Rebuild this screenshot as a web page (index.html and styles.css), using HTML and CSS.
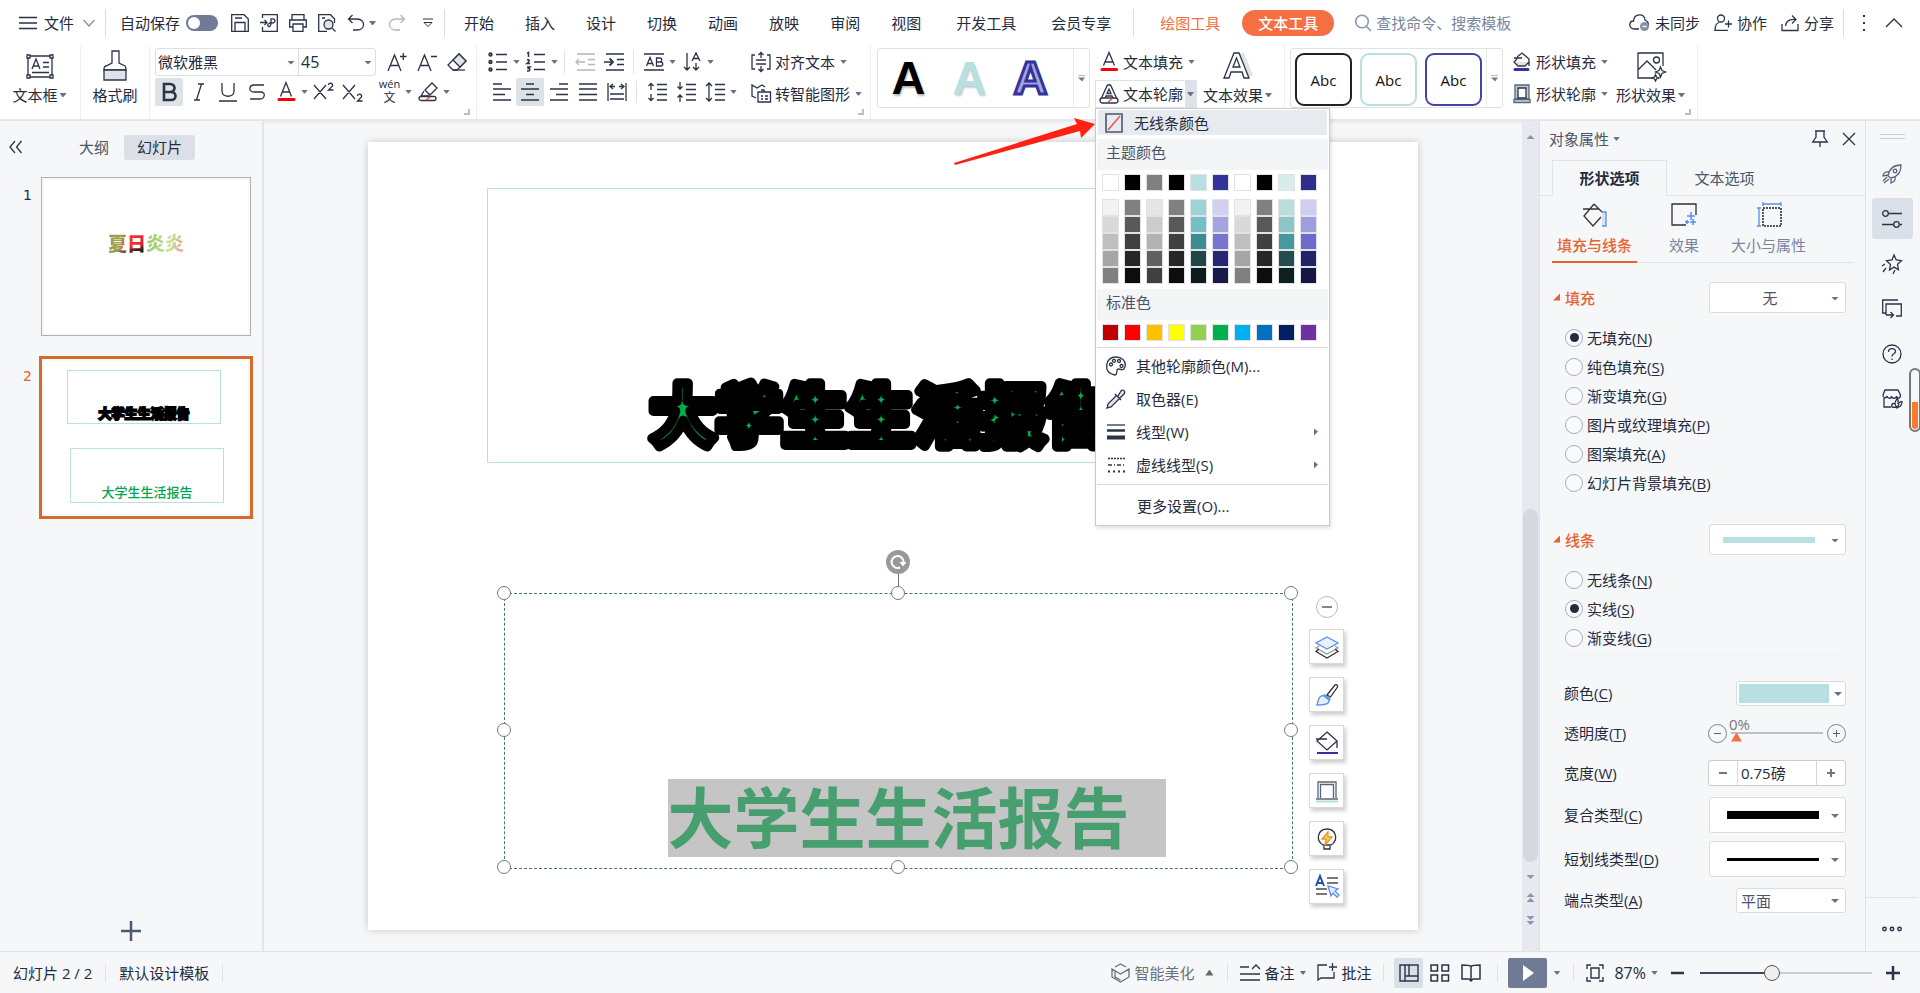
FILE: index.html
```html
<!DOCTYPE html>
<html lang="zh-CN">
<head>
<meta charset="utf-8">
<title>演示文稿</title>
<link rel="stylesheet" href="styles.css">
</head>
<body>
<div class="app">
  <header class="menubar">
    <button class="file-menu"><svg width="18" height="14" viewBox="0 0 18 14"><path d="M0 1.5h18M0 7h18M0 12.5h18"/></svg>文件<svg class="muted chev" width="12" height="8" viewBox="0 0 12 8"><path d="M.5 1 6 7l5.500-6"/></svg></button>
    <span class="bar-line"></span>
    <label class="autosave">自动保存<input type="checkbox" class="toggle"></label>
    <div class="quick">
      <button aria-label="保存"><svg width="18" height="18" viewBox="0 0 18 18"><path d="M.7.7h12.300l4.300 4.300v12.300H.7zM4 17V8.500h10V17M4 4h7"/></svg></button>
      <button aria-label="输出"><svg width="18" height="18" viewBox="0 0 18 18"><path d="M2.500 4V.7h14.800v16.600H2.500V13M0 8.500h7M4.500 6 7 8.500 4.500 11M8 12c2 2 3-1 3-3V5c5-1 5 4 1 4-4 0-5 2-4 3"/></svg></button>
      <button aria-label="打印"><svg width="18" height="18" viewBox="0 0 18 18"><path d="M3 6V.7h12V6M3.500 13H.7V6h16.600v7h-2.800M4 10h10v7.300H4z"/></svg></button>
      <button aria-label="预览"><svg width="18" height="18" viewBox="0 0 18 18"><path d="M9 17.300H.7V.7h11.800l4 4V9M4 4h3"/><circle cx="10.500" cy="10.500" r="4.500" fill="#dfe3ea"/><path d="m14 14 3.500 3.500"/></svg></button>
      <button aria-label="撤销"><svg width="18" height="18" viewBox="0 0 18 18"><path d="M5.500 1 1.500 5l4 4M1.500 5H10c9 0 8.500 11 0 11H6"/></svg><i class="caret"></i></button>
      <button aria-label="重做"><svg class="faint" width="18" height="18" viewBox="0 0 18 18"><path d="m12.500 1 4 4-4 4M16.500 5H8c-9 0-8.500 11 0 11h4"/></svg></button>
      <button aria-label="更多"><svg width="10" height="10" viewBox="0 0 10 10"><path d="M0 1h10M1 4.500l4 4 4-4z" stroke-width="1"/></svg></button>
    </div>
    <span class="bar-line"></span>
    <nav class="tabs">
      <a href="#">开始</a><a href="#">插入</a><a href="#">设计</a><a href="#">切换</a><a href="#">动画</a><a href="#">放映</a><a href="#">审阅</a><a href="#">视图</a>
    </nav>
    <nav class="tabs wide"><a href="#">开发工具</a><a href="#">会员专享</a></nav>
    <span class="bar-line"></span>
    <nav class="tabs tools"><a href="#">绘图工具</a><a href="#" class="pill">文本工具</a></nav>
    <label class="search"><svg width="18" height="18" viewBox="0 0 18 18"><circle cx="7" cy="7.500" r="6.300"/><path d="m11.500 12.500 4.500 4.500"/></svg><input type="text" placeholder="查找命令、搜索模板"></label>
    <div class="account">
      <button><svg width="21" height="18" viewBox="0 0 21 18"><path d="M10 15H5C-1 14 0 7 4.500 7 5-1 16-1 16 6c3 1 4 4 3 6"/><circle cx="15.500" cy="12.500" r="4.500" fill="#8791a8" stroke="none"/><path d="M13.500 12.500h4" stroke="#fff"/></svg>未同步</button>
      <button><svg width="18" height="18" viewBox="0 0 18 18"><circle cx="7" cy="4.500" r="3.500"/><path d="M5 8.500C1.500 9.500 1 12 1 16.300h13M14.500 6.500v7M11 10h7"/></svg>协作</button>
      <button><svg width="18" height="18" viewBox="0 0 18 18"><path d="M1 10v6.500h16V10M4.500 12C5 7 9 5 14.500 5.500M11 1.500l4 4-4 4"/></svg>分享</button>
      <span class="bar-line"></span>
      <button aria-label="选项"><svg width="4" height="18" viewBox="0 0 4 18"><path d="M1 2h2M1 9h2M1 16h2" stroke-width="2"/></svg></button>
      <button aria-label="收起功能区"><svg width="18" height="10" viewBox="0 0 18 10"><path d="m1 9 8-8 8 8"/></svg></button>
    </div>
  </header>

  <section class="ribbon">
    <div class="group"><button class="big"><svg width="28" height="30" viewBox="0 0 28 30"><path d="M2 5h24v21H2z"/><path d="M1 4h3v3H1zM24 4h3v3h-3zM1 24h3v3H1zM24 24h3v3h-3z" fill="#fff"/><path d="m6 18 4-10 4 10M7.500 15h5M17 11.500h6M17 16h6M6 21.500h17"/></svg><span>文本框<i class="caret"></i></span></button></div>
    <div class="group"><button class="big narrow"><svg width="24" height="31" viewBox="0 0 24 31"><path d="M9 1h7v12l6 3c1 1 1 2 1 4H1c0-3 1-4 2-4l6-3z"/><path d="M1 20h22v10H1z" fill="#dfe2e8"/></svg><span>格式刷</span></button></div>

    <div class="group text-group">
      <div class="tool-row">
        <div class="font-box"><label class="pick font-name"><select aria-label="字体"><option>微软雅黑</option></select></label><label class="pick font-size"><select aria-label="字号"><option>45</option></select></label></div>
        <div class="sizers">
          <button aria-label="增大字号"><svg width="20" height="20" viewBox="0 0 20 20"><path d="m1 19 6.500-16L14 19M3.500 13.500h8M13 4.500h6.500M16.300 1v7"/></svg></button>
          <button aria-label="减小字号"><svg width="20" height="20" viewBox="0 0 20 20"><path d="m1 19 6.500-16L14 19M3.500 13.500h8M14 4.500h6"/></svg></button>
          <button aria-label="清除格式"><svg width="20" height="20" viewBox="0 0 20 20"><path d="M12 2 19 9l-9 9H6l-5-5z"/><path d="m6 8 7 7 6-6-7-7z" fill="#e1e4e9"/><path d="M6 18h12"/></svg></button>
        </div>
      </div>
      <div class="tool-row">
        <button class="sq on gap" aria-label="加粗"><svg width="20" height="20" viewBox="0 0 20 20"><path d="M5 2h6c6 0 6 8 0 8H5zM5 10h7c6 0 6 8 0 8H5z" stroke-width="2.600"/></svg></button>
        <button class="sq" aria-label="倾斜"><svg width="20" height="20" viewBox="0 0 20 20"><path d="M9 2h6M5 18h6M12.500 2 7.500 18"/></svg></button>
        <button class="sq" aria-label="下划线"><svg width="20" height="20" viewBox="0 0 20 20"><path d="M4 1v8c0 7 12 7 12 0V1M1 19h18"/></svg></button>
        <button class="sq" aria-label="删除线"><svg width="20" height="20" viewBox="0 0 20 20"><path d="M17 3H7C2 3 1 10 7 10h7c5 0 4 7-1 7H3"/></svg></button>
        <button class="sq" aria-label="字体颜色"><svg width="20" height="20" viewBox="0 0 20 20"><path d="m4.500 14.500 5.500-14 5.500 14M6.500 10h7"/><path d="M3 17.500h15" stroke="#f00" stroke-width="3" stroke-linecap="round"/></svg></button><i class="caret"></i>
        <button class="sq" aria-label="上标"><svg width="20" height="20" viewBox="0 0 20 20"><path d="M0 3l12 14M12 3 0 17M14.500 3c0-3 5-2 4 1l-4 4H19.500"/></svg></button>
        <button class="sq gap" aria-label="下标"><svg width="20" height="20" viewBox="0 0 20 20"><path d="M0 3l12 14M12 3 0 17M14.500 14c0-3 5-2 4 1l-4 4H19.500"/></svg></button>
        <button class="sq pinyin" aria-label="拼音指南"><span>wén</span><b>文</b></button><i class="caret"></i>
        <button class="sq" aria-label="突出显示"><svg width="20" height="20" viewBox="0 0 20 20"><path d="m7 8 7-7 5 5-7 7zM7 8l5 5M6 9l-3 5h5l3-1"/><rect x="1" y="14.500" width="17" height="4" rx="2"/><path d="m8 18 4-3" stroke="#e44"/></svg></button><i class="caret"></i>
      </div>
      <i class="corner"></i>
    </div>

    <div class="group para-group">
      <div class="para-tools">
        <div class="tool-row">
          <button class="sq" aria-label="项目符号"><svg width="20" height="20" viewBox="0 0 20 20"><path d="M8 2.500h11M8 10h11M8 17.500h11"/><g stroke-width="1.800"><circle cx="2.500" cy="2.500" r="1.300"/><circle cx="2.500" cy="10" r="1.300"/><circle cx="2.500" cy="17.500" r="1.300"/></g></svg></button><i class="caret"></i>
          <button class="sq" aria-label="编号"><svg width="20" height="20" viewBox="0 0 20 20"><path d="M8 2.500h11M8 10h11M8 17.500h11"/><path d="M1 1.500 2.500.5V5M1 8c3-1 3 1 0 3.500h3M1 15h3L2.500 16.500c2 0 2 3-1.500 2.500" stroke-width="1.500"/></svg></button><i class="caret"></i>
          <span class="mini-line"></span>
          <button class="sq" aria-label="减少缩进"><svg class="faint" width="20" height="20" viewBox="0 0 20 20"><path d="M2 2h18M13 7.500h7M13 12.500h7M2 18h18M1 10h9M4 7l-3 3 3 3"/></svg></button>
          <button class="sq" aria-label="增加缩进"><svg width="20" height="20" viewBox="0 0 20 20"><path d="M2 2h18M13 7.500h7M13 12.500h7M2 18h18M0 10h9"/><path d="m5.500 6.500 3.500 3.500-3.500 3.500" stroke-width="1.800"/></svg></button>
          <span class="mini-line"></span>
          <button class="sq" aria-label="字符间距"><svg width="20" height="20" viewBox="0 0 20 20"><path d="M0 2h20M0 18h20M2.500 14 6 5.500 9.500 14M4 11.500h4M12.500 6h3c3 0 3 4 0 4h-3zM12.500 10h4c3 0 3 4 0 4h-4z"/></svg></button><i class="caret"></i>
          <button class="sq" aria-label="文字方向"><svg width="20" height="20" viewBox="0 0 20 20"><path d="M5 1v17M2 15l3 3 3-3M10 9l4-8 4 8M11.500 6.500h5M14 11v7M11 15l3 3 3-3"/></svg></button><i class="caret"></i>
        </div>
        <div class="tool-row inset">
          <button class="sq" aria-label="左对齐"><svg width="20" height="20" viewBox="0 0 20 20"><path d="M1 2h9M1 7h18M1 12.500h12M1 18h18"/></svg></button>
          <button class="sq on" aria-label="居中"><svg width="20" height="20" viewBox="0 0 20 20"><path d="M6 2h8M1 7h18M6 12.500h8M1 18h18"/></svg></button>
          <button class="sq" aria-label="右对齐"><svg width="20" height="20" viewBox="0 0 20 20"><path d="M10 2h9M1 7h18M7 12.500h12M1 18h18"/></svg></button>
          <button class="sq" aria-label="两端对齐"><svg width="20" height="20" viewBox="0 0 20 20"><path d="M1 2h18M1 7h18M1 12.500h18M1 18h18"/></svg></button>
          <button class="sq" aria-label="分散对齐"><svg width="20" height="20" viewBox="0 0 20 20"><path d="M1 1v18M19 1v18M3 4.500h5M12 4.500h5M6 2 3 4.500 6 7M14 2l3 2.500L14 7M3 12h14M3 17h14"/></svg></button>
          <span class="mini-line"></span>
          <button class="sq" aria-label="增大段距"><svg width="20" height="20" viewBox="0 0 20 20"><path d="M10 2.500h10M10 7.500h10M10 12.500h10M10 18h10M4 8V1M1.500 4 4 1.500 6.500 4M4 12v7M1.500 16 4 18.500 6.500 16"/></svg></button>
          <button class="sq" aria-label="减小段距"><svg width="20" height="20" viewBox="0 0 20 20"><path d="M10 2.500h10M10 7.500h10M10 12.500h10M10 18h10M4 0v7M1.500 4.500 4 7l2.500-2.500M4 20v-7M1.500 15.500 4 13l2.500 2.500"/></svg></button>
          <button class="sq" aria-label="行距"><svg width="20" height="20" viewBox="0 0 20 20"><path d="M10 2.500h10M10 7.500h10M10 12.500h10M10 18h10M4 1v18M1 4l3-3 3 3M1 16l3 3 3-3"/></svg></button><i class="caret"></i>
        </div>
      </div>
      <div class="stack">
        <button class="line-btn"><svg width="20" height="20" viewBox="0 0 20 20"><path d="M4 3H1v14h3M16 3h3v14h-3M5 8h10M5 12h10M10 0v6M7.500 3 10 .5 12.500 3M10 14v6M7.500 17l2.500 2.500 2.500-2.500"/></svg>对齐文本<i class="caret"></i></button>
        <button class="line-btn"><svg width="20" height="20" viewBox="0 0 20 20"><path d="M5 14 1 12V1l5 3 5-3 3 2M7 8h12.500v10H7zM10 12h2M14 12h3M10 15h2M14 15h3M13 8V6h-3"/></svg>转智能图形<i class="caret"></i></button>
      </div>
      <i class="corner"></i>
    </div>

    <div class="group art-group">
      <div class="gallery"><button class="art black">A</button><button class="art mint">A</button><button class="art indigo">A</button><button class="more" aria-label="更多样式"><i></i></button></div>
      <div class="stack">
        <button class="line-btn"><svg width="20" height="20" viewBox="0 0 20 20"><path d="m4.500 13.500 5.500-13 5.500 13M6.500 10h7"/><path d="M3 17.500h14.500" stroke="#f00" stroke-width="3" stroke-linecap="round"/></svg>文本填充<i class="caret"></i></button>
        <div class="outline-host">
          <button class="line-btn outline-btn"><span><svg width="20" height="20" viewBox="0 0 20 20"><path d="M2 15 8.500 1h3L18 15h-3.500L13 12H7l-1.500 3zM8 9.500h4L10 5z"/><rect x="1" y="14" width="18" height="5" rx="2.500" fill="#fff"/><path d="m9 18 4-3" stroke="#e44"/></svg>文本轮廓</span><i class="caret"></i></button>
          <div class="dropdown">
            <button class="no-line"><svg width="18" height="20" viewBox="0 0 18 20"><path d="M1 1h16v18H1z" stroke="#4a5670" stroke-width="1.600"/><path d="M3 17 15 3" stroke="#ef5350" stroke-width="1.500"/></svg>无线条颜色</button>
            <h3>主题颜色</h3>
            <div class="swatches" id="theme-base"></div>
            <div class="swatches shades" id="theme-shades"></div>
            <h3>标准色</h3>
            <div class="swatches" id="standard"></div>
            <hr>
            <button class="item"><svg width="20" height="20" viewBox="0 0 20 20"><path d="M11 14c0 3-1 5-2 5C3 18 0 15 .7 9 1 4 5 1 10 1c6 0 9.500 4 9.300 8C19 13 17 14 15 13.500c-2-.5-4-1-4 .5z"/><circle cx="5" cy="8.500" r="1.500"/><circle cx="8" cy="4.800" r="1.500"/><circle cx="13" cy="5" r="1.500"/><circle cx="15.500" cy="10" r="1.500"/></svg>其他轮廓颜色(M)...</button>
            <button class="item"><svg width="20" height="20" viewBox="0 0 20 20"><path d="M11 6 2 15l-1 4 4-1 9-9M9 5l6 6M12 7l3-5c2-2 5 0 3 3l-4 4" fill="#e6e9ed"/></svg>取色器(E)</button>
            <button class="item"><svg width="20" height="20" viewBox="0 0 20 20"><path d="M1 3h18"/><path d="M1 8.500h18" stroke-width="2.500"/><path d="M1 15.500h18" stroke-width="4"/></svg>线型(W)<i class="sub"></i></button>
            <button class="item"><svg width="20" height="20" viewBox="0 0 20 20"><path d="M2 3.500h17" stroke-dasharray="2 1"/><path d="M2 10h17" stroke-dasharray="4 2 1 2"/><path d="M2 16.500h17" stroke-width="2" stroke-dasharray="2 3"/></svg>虚线线型(S)<i class="sub"></i></button>
            <hr>
            <button class="item last">更多设置(O)...</button>
          </div>
        </div>
      </div>
      <button class="big"><svg width="32" height="30" viewBox="0 0 32 30"><path d="M16 2h6l9 22-8 3z" fill="#e3e3e5" stroke="none"/><path d="M2 27 12 2h5l10 25h-5l-2-6H9l-2 6zM11 16h7l-3.500-9z" fill="#fff"/></svg><span>文本效果<i class="caret"></i></span></button>
    </div>

    <div class="group art-group shape-group">
      <div class="gallery shapes"><button class="abc k">Abc</button><button class="abc m">Abc</button><button class="abc i">Abc</button><button class="more" aria-label="更多形状样式"><i></i></button></div>
      <div class="stack">
        <button class="line-btn"><svg width="20" height="20" viewBox="0 0 20 20"><path d="M3 10h13l-3 3H6z" fill="#dfe3e8" stroke="none"/><path d="m5 5 5-4 7 6v3l-4 4H6L2 10l3-3M2 6h8M17 8v6"/><path d="M3 17.500h13" stroke="#33339b" stroke-width="3" stroke-linecap="round"/></svg>形状填充<i class="caret"></i></button>
        <button class="line-btn"><svg width="20" height="20" viewBox="0 0 20 20"><path d="M3 1h14v14H3z" fill="#c5cad3" stroke="#59647a"/><path d="M6 4h8v10H6z" fill="#fff"/><path d="M2 15.500h16v3H2z" fill="#b8dfe1" stroke="#59647a"/></svg>形状轮廓<i class="caret"></i></button>
      </div>
      <button class="big"><svg width="30" height="30" viewBox="0 0 30 30"><path d="M17 27H2V2h25v13M2 19l9-9 9 9"/><circle cx="20.500" cy="9" r="3"/><path d="m24.500 16 1.500 3.500 3.500 1.500-3.500 1.500-1.500 3.500-1.500-3.500-3.500-1.500 3.500-1.500zM19.500 23.500l1 2.500 2.500 1-2.500 1-1 2-1-2-2.500-1 2.500-1z" fill="#fff"/></svg><span>形状效果<i class="caret"></i></span></button>
      <i class="corner"></i>
    </div>
  </section>

  <svg class="pointer" width="142" height="50" viewBox="0 0 142 50"><path d="M0 46 123 7 120 1l21 6-14 14-1-7L1 48z"/></svg>

  <main class="workspace">
    <aside class="slides">
      <div class="slides-head">
        <button class="collapse" aria-label="折叠"><svg width="13" height="12" viewBox="0 0 13 12"><path d="M6 0 1 6l5 6M12.500 0l-5 6 5 6"/></svg></button>
        <button class="view-tab">大纲</button><button class="view-tab on">幻灯片</button>
      </div>
      <ol class="thumbs">
        <li><span class="num">1</span><div class="thumb"><b class="summer">夏日炎炎</b></div></li>
        <li class="current"><span class="num">2</span><div class="thumb"><div class="mini-box first">大学生生活报告</div><div class="mini-box second">大学生生活报告</div></div></li>
      </ol>
      <button class="add" aria-label="新建幻灯片"><svg width="20" height="20" viewBox="0 0 20 20"><path d="M10 0v20M0 10h20" stroke="#4c5874" stroke-width="2.500"/></svg></button>
    </aside>

    <section class="stage">
      <div class="slide">
        <div class="text-box plain"><svg class="outlined" width="462" height="78" viewBox="0 0 462 78"><text x="0" y="65">大学生生活报告</text></svg></div>
        <div class="text-box selected">
          <span class="title marked">大学生生活报告</span>
          <i class="stem"></i>
          <svg class="rotate" width="24" height="24" viewBox="0 0 24 24"><circle cx="12" cy="12" r="12"/><path d="M14 17.500A6 6 0 1 1 17.500 13"/><path d="M13.500 12h7l-3.500 4.500z" class="tip"/></svg>
          <i class="handle nw"></i><i class="handle n"></i><i class="handle ne"></i><i class="handle w"></i><i class="handle e"></i><i class="handle sw"></i><i class="handle s"></i><i class="handle se"></i>
        </div>
        <div class="float-tools">
          <button class="fold" aria-label="收起"></button>
          <button aria-label="叠放次序"><svg width="24" height="24" viewBox="0 0 24 24"><path d="m4 11-3 2 11 6 11-6-3-2" stroke="#999"/><path d="m4 14-3 2.500L12 23l11-6.500-3-2.500" stroke="#333"/><path d="M12 2 23 8l-11 6L1 8z" stroke="#5b8fe8" fill="#e8f0fc"/></svg></button>
          <button aria-label="格式刷"><svg width="24" height="24" viewBox="0 0 24 24"><path d="m12 12 8-10c1-1 3 0 2.500 2l-7 10z" stroke="#333"/><path d="m10 12 5 4-2 4c-2 2-6 2-11 2 1-3 1-7 4-9zM9 13l5 4" stroke="#5b8fe8" fill="#e8f0fc"/></svg></button>
          <button aria-label="填充"><svg width="24" height="24" viewBox="0 0 24 24"><path d="m12 1 10 9-10 9-10-9zM1 8h11M22 10v7"/><path d="M2 22h21" stroke="#2f2f9d" stroke-width="2"/></svg></button>
          <button aria-label="轮廓"><svg width="24" height="24" viewBox="0 0 24 24"><path d="M3 19V3h18v16" stroke="#59647a"/><path d="M5.500 19V5.500h13V19M1 20h22" stroke="#59647a"/><path d="M1 22.500h22" stroke="#b8dfe1" stroke-width="2"/></svg></button>
          <button aria-label="智能"><svg width="24" height="24" viewBox="0 0 24 24"><path d="M8 18C0 13 3 2 12 2s12 11 4 16zM9 19v3h6v-3" stroke="#333"/><path d="m13 5-6 7h4l-1 6 7-8h-4z" fill="#ffd83d" stroke="#e8913a"/></svg></button>
          <button aria-label="文字效果"><svg width="24" height="24" viewBox="0 0 24 24"><path d="M1 11 5 1l4 10M3 8h4" stroke="#2b4fa0" stroke-width="2"/><path d="M12 3h11M12 8h11M1 14h11M1 19h11" stroke="#777" stroke-width="1.800"/><path d="m13 11 3 10 2-3 4 4 2-2-4-4 3-2z" fill="#e8f0fc" stroke="#5b8fe8"/></svg></button>
        </div>
      </div>
    </section>

    <div class="scroll"><i class="tri up"></i><div class="track"><div class="thumb-bar"></div></div><i class="tri down"></i><span><i class="tri up"></i><i class="tri up"></i></span><span><i class="tri down"></i><i class="tri down"></i></span></div>

    <aside class="props">
      <div class="props-head"><span>对象属性<i class="caret"></i></span><button aria-label="固定"><svg width="16" height="17" viewBox="0 0 16 17"><path d="M3 1h10M4 1v6L.7 12h14.600L12 7V1M8 12v5"/></svg></button><button aria-label="关闭"><svg width="14" height="14" viewBox="0 0 14 14"><path d="m1 1 12 12M13 1 1 13"/></svg></button></div>
      <div class="props-tabs"><button class="on">形状选项</button><button>文本选项</button></div>
      <div class="sub-tabs">
        <button class="on"><svg width="28" height="28" viewBox="0 0 28 28"><path d="m13 3-10 12 9 10 8-9M13 3l8 8M2 8h16" stroke="#333"/><path d="M21 11h4v14h-4" stroke="#5b8fe8" fill="#d5e3fa"/></svg>填充与线条</button>
        <button><svg width="28" height="28" viewBox="0 0 28 28"><path d="M16 24H2V3h24v11" stroke="#333"/><path d="M21 11v8M17 15h8M17 19v4M15 21h4M23 18v6M20 21h6" stroke="#5b8fe8" stroke-width="1.500"/></svg>效果</button>
        <button><svg width="28" height="28" viewBox="0 0 28 28"><path d="M8 7h18v18H8z" stroke="#222" stroke-width="1.500" stroke-dasharray="2 1"/><path d="M8 3h18M8 1v4M26 1v4M4 7v18M2 7h4M2 25h4" stroke="#5b8fe8"/></svg>大小与属性</button>
      </div>
      <div class="props-body">
        <div class="section-head"><h2>填充</h2><label class="pick drop"><select aria-label="填充方式"><option>无</option></select></label></div>
        <div class="radios">
          <label><input type="radio" name="fill" checked><span>无填充(<u>N</u>)</span></label>
          <label><input type="radio" name="fill"><span>纯色填充(<u>S</u>)</span></label>
          <label><input type="radio" name="fill"><span>渐变填充(<u>G</u>)</span></label>
          <label><input type="radio" name="fill"><span>图片或纹理填充(<u>P</u>)</span></label>
          <label><input type="radio" name="fill"><span>图案填充(<u>A</u>)</span></label>
          <label><input type="radio" name="fill"><span>幻灯片背景填充(<u>B</u>)</span></label>
        </div>
        <div class="section-head lines"><h2>线条</h2><button class="pick drop preview" aria-label="线条样式"><i class="bar mint-bar"></i></button></div>
        <div class="radios">
          <label><input type="radio" name="line"><span>无线条(<u>N</u>)</span></label>
          <label><input type="radio" name="line" checked><span>实线(<u>S</u>)</span></label>
          <label><input type="radio" name="line"><span>渐变线(<u>G</u>)</span></label>
        </div>
        <div class="fields">
          <div class="field"><span>颜色(<u>C</u>)</span><button class="pick color-drop" aria-label="颜色"><i></i></button></div>
          <div class="field"><label for="alpha">透明度(<u>T</u>)</label><div class="alpha"><button aria-label="减少"><svg width="9" height="9" viewBox="0 0 9 9"><path d="M1 4.500h7"/></svg></button><div class="alpha-track"><output>0%</output><input id="alpha" type="range" min="0" max="100" value="0"></div><button aria-label="增加"><svg width="9" height="9" viewBox="0 0 9 9"><path d="M1 4.500h7M4.500 1v7"/></svg></button></div></div>
          <div class="field"><label for="width">宽度(<u>W</u>)</label><div class="spin"><button aria-label="减小宽度"><svg width="8" height="10" viewBox="0 0 8 10"><path d="M0 5h8"/></svg></button><input id="width" type="text" value="0.75磅"><button aria-label="增大宽度"><svg width="8" height="10" viewBox="0 0 8 10"><path d="M0 5h8M4 1v8"/></svg></button></div></div>
          <div class="field tall"><span>复合类型(<u>C</u>)</span><button class="pick drop preview" aria-label="复合类型"><i class="bar thick"></i></button></div>
          <div class="field tall"><span>短划线类型(<u>D</u>)</span><button class="pick drop preview" aria-label="短划线类型"><i class="bar thin"></i></button></div>
          <div class="field short"><label for="cap">端点类型(<u>A</u>)</label><span class="pick cap-drop"><select id="cap"><option>平面</option></select></span></div>
        </div>
      </div>
    </aside>

    <aside class="rail">
      <i class="grip"></i>
      <button aria-label="快捷"><svg class="slate" width="20" height="20" viewBox="0 0 20 20"><path d="M6 12c1-6 5-11 13-11 0 8-4 12-10 13zM7 8C3 7 1 10 1 12l5-1M9 14v5c3-1 5-3 4-7M5 13l-4 4M7 15l-5 4"/><circle cx="13" cy="7" r="1.800"/></svg></button>
      <button class="on" aria-label="属性"><svg width="20" height="20" viewBox="0 0 20 20"><circle cx="3.500" cy="4.500" r="2.800"/><path d="M6.500 4.500H20M0 15.500h11.500M17.500 15.500H20"/><circle cx="14.500" cy="15.500" r="2.800"/></svg></button>
      <button aria-label="动画"><svg width="20" height="20" viewBox="0 0 20 20"><path d="m12 1 2.300 5 5.200.700-4 3.600 1 5.500-4.500-2.700L7.500 16l1-5.500-4-3.800L10 6zM3 10l-3 2M4 14l-3 4M13 16l-2 4"/></svg></button>
      <button aria-label="切换"><svg width="20" height="20" viewBox="0 0 20 20"><path d="M16 1H.7v13H4M4 16V5h15.300v12H14M4 16h7M8.500 13l3 3-3 3"/></svg></button>
      <button aria-label="帮助"><svg width="20" height="20" viewBox="0 0 20 20"><circle cx="10" cy="10" r="9"/><path d="M6.500 8c0-5 7-4 7-.5 0 2.500-3.500 2-3.500 5M10 14.500v1.500"/></svg></button>
      <button aria-label="素材"><svg width="20" height="20" viewBox="0 0 20 20"><path d="M3 1h13l2.500 5c0 4-4 4-4 1 0 3-5 3-5 0 0 3-4 3-4.500 0C4 10 1 9 1 6zM2 9v9h7M10 18c-1-4 2-4 3-3 0-3 1-4 2.500-6 1 3 1 4 .5 6 2-3 4-2 4-3 0 7-5 7-10 6zM13 15l2 4 2-4"/></svg></button>
      <button class="dots" aria-label="更多"><svg width="20" height="6" viewBox="0 0 20 6"><g stroke-width="1.500"><circle cx="2.500" cy="3" r="1.700"/><circle cx="10" cy="3" r="1.700"/><circle cx="17.500" cy="3" r="1.700"/></g></svg></button>
      <i class="gauge"></i>
    </aside>
  </main>

  <footer class="status">
    <span>幻灯片 2 / 2</span><span class="stat-line"></span><span>默认设计模板</span><span class="stat-line"></span>
    <div class="status-right">
      <button class="beautify"><svg width="19" height="20" viewBox="0 0 19 20"><path d="M4 4 9.500 1 15 4M1 6l8.500 5L18 6v8l-8.500 5L1 14zM4 8v6l5.500 3"/></svg>智能美化<i class="tri-up"></i></button>
      <span class="stat-line"></span>
      <button><svg width="20" height="20" viewBox="0 0 20 20"><path d="M0 4h9M12 6l4-4 4 4M0 11h20M0 17h20"/></svg>备注<i class="caret"></i></button>
      <button><svg width="20" height="20" viewBox="0 0 20 20"><path d="M10 2H1v15l3-2h13V9M15.500 0v8M12 4h8"/></svg>批注</button>
      <span class="stat-line"></span>
      <div class="views">
        <button class="on" aria-label="普通视图"><svg width="20" height="18" viewBox="0 0 20 18"><path d="M1 1h18v16H1zM6 1v16M10 1v11h9M6 12h4" stroke-width="1.400"/></svg></button>
        <button aria-label="幻灯片浏览"><svg width="20" height="18" viewBox="0 0 20 18"><path d="M1 1h6.500v6H1zM12 1h6.500v6H12zM1 11h6.500v6H1zM12 11h6.500v6H12z" stroke-width="1.500"/></svg></button>
        <button aria-label="阅读视图"><svg width="20" height="18" viewBox="0 0 20 18"><path d="M10 2.500C9 1 7 1 1 1v14h7l2 2 2-2h7V1c-6 0-8 0-9 1.500V17" stroke-width="1.500"/></svg></button>
      </div>
      <span class="stat-line"></span>
      <button class="play" aria-label="放映"><svg width="12" height="16" viewBox="0 0 12 16"><path d="M1 0v16l11-8z"/></svg></button><i class="caret"></i>
      <span class="stat-line"></span>
      <button class="fit" aria-label="适应窗口"><svg width="18" height="18" viewBox="0 0 18 18"><path d="M1 5V1h4M13 1h4v4M17 13v4h-4M5 17H1v-4M5 4h8v10H5z" stroke-width="1.400"/></svg></button>
      <button class="pct">87%<i class="caret"></i></button>
      <button aria-label="缩小"><svg width="13" height="14" viewBox="0 0 13 14"><path d="M0 7h13" stroke-width="2.500"/></svg></button>
      <input class="zoom" type="range" min="0" max="100" value="41" aria-label="缩放">
      <button aria-label="放大"><svg width="14" height="14" viewBox="0 0 14 14"><path d="M0 7h14M7 0v14" stroke-width="2.500"/></svg></button>
    </div>
  </footer>
</div>
<script src="swatches.js"></script>
</body>
</html>
```
FILE: swatches.js
```js
const base = ['#ffffff', '#000000', '#808080', '#000000', '#b8dfe1', '#333399', '#ffffff', '#000000', '#d9ecec', '#2d2d8a'];
const shades = [
  ['#f2f2f2', '#808080', '#e6e6e6', '#808080', '#9dd3d6', '#d2d2f0', '#f2f2f2', '#808080', '#badddd', '#cecef0'],
  ['#d9d9d9', '#595959', '#cccccc', '#595959', '#73c1c6', '#a4a4df', '#d9d9d9', '#595959', '#8bc7c9', '#9d9ddf'],
  ['#bfbfbf', '#404040', '#b3b3b3', '#404040', '#3c8d92', '#7676d1', '#bfbfbf', '#404040', '#459a9d', '#6c6ccf'],
  ['#a6a6a6', '#262626', '#606060', '#262626', '#1e4649', '#262673', '#a6a6a6', '#262626', '#234d4f', '#222268'],
  ['#808080', '#0d0d0d', '#404040', '#0d0d0d', '#0c1c1d', '#19194c', '#808080', '#0d0d0d', '#0e1f1f', '#161645']
];
const standard = ['#c00000', '#ff0000', '#ffc000', '#ffff00', '#92d050', '#00b050', '#00b0f0', '#0070c0', '#002060', '#7030a0'];

function fill(id, colors) {
  const host = document.getElementById(id);
  for (const color of colors) {
    const swatch = document.createElement('button');
    swatch.style.backgroundColor = color;
    swatch.setAttribute('aria-label', color);
    host.appendChild(swatch);
  }
}
fill('theme-base', base);
fill('theme-shades', shades.flat());
fill('standard', standard);
```
FILE: styles.css
```css
* { box-sizing: border-box; }
html, body { height: 100%; margin: 0; }
body { font: 15px/24px "Open Sans", "Noto Sans CJK SC", sans-serif; color: #242b3d; background: #f5f7f9; overflow: hidden; }
button, input, select { font: inherit; color: inherit; border: 0; background: none; padding: 0; margin: 0; outline: 0; }
button { display: inline-flex; align-items: center; justify-content: center; white-space: nowrap; flex: none; }
a { color: inherit; text-decoration: none; }
h2, h3 { margin: 0; font: inherit; }
select { appearance: none; width: 100%; height: 100%; }
svg { display: block; flex: none; fill: none; stroke: #2b3347; stroke-width: 1.3; overflow: visible; }
.muted { stroke: #8a92a3; }
.faint { stroke: #b4b7bd; }
.slate { stroke: #59647a; }
.caret { flex: none; width: 9px; height: 4px; background: #66728d; clip-path: polygon(1px 0, 8px 0, 5px 4px, 4px 4px); }

.app { display: flex; flex-direction: column; height: 100vh; position: relative; }

/* menu bar */
.menubar { display: flex; align-items: center; height: 46px; background: #fff; padding: 0 17px 0 19px; flex: none; white-space: nowrap; }
.file-menu { gap: 7px; }
.chev { margin-left: 2px; }
.bar-line { width: 1px; height: 28px; background: #dadde3; flex: none; margin: 0 10px; }
.autosave { display: flex; align-items: center; gap: 6px; margin-left: 4px; }
.toggle { appearance: none; width: 32px; height: 16px; border-radius: 8px; background: #707b95; position: relative; }
.toggle::before { content: ""; position: absolute; left: 2px; top: 2px; width: 12px; height: 12px; border-radius: 6px; background: #fff; }
.quick { display: flex; gap: 11px; margin: 0 1px 0 13px; }
.quick button { gap: 3px; }
.quick button:last-child { margin-left: 6px; }
.tabs { display: flex; gap: 31px; margin: 0 35px 0 9px; }
.tabs.wide { gap: 35px; margin: 0 12px 0 0; }
.tabs.tools { gap: 22px; margin: 0 21px 0 16px; align-items: center; color: #f56e42; }
.pill { background: #f66f43; color: #fff; font-weight: 500; border-radius: 13px; padding: 1px 16px; }
.search { display: flex; align-items: center; gap: 3px; flex: 0 1 200px; }
.search svg { stroke: #8b96ae; stroke-width: 1.600; }
.search input { flex: 1; min-width: 0; }
.search input::placeholder { color: #7a859c; opacity: 1; }
.account { display: flex; align-items: center; margin-left: auto; gap: 14px; }
.account button { gap: 5px; }
.account .bar-line { margin: 0 4px 0 -5px; }
.account button:last-child { margin-left: 5px; }

/* ribbon */
.ribbon { display: flex; background: #fff; height: 75px; border-bottom: 2px solid #e4e5e8; flex: none; }
.group { display: flex; position: relative; border-right: 1px solid #eceef1; padding-top: 2px; }
.big { flex-direction: column; justify-content: flex-end; width: 80px; height: 58px; gap: 3px; line-height: 22px; }
.big.narrow { width: 68px; }
.big span { display: flex; align-items: center; gap: 1px; }
.corner { position: absolute; right: 6px; bottom: 4px; width: 6px; height: 6px; border: solid #b5bccb; border-width: 0 2px 2px 0; }
.tool-row { display: flex; align-items: center; height: 27px; }
.text-group { flex-direction: column; gap: 3px; width: 327px; padding-left: 5px; }
.font-box { display: flex; width: 221px; height: 28px; border: 1px solid #dcdfe4; border-radius: 3px; }
.pick { position: relative; display: flex; align-items: center; }
.pick::after { content: ""; position: absolute; right: 6px; top: 50%; margin-top: -1px; width: 8px; height: 4px; background: #66728d; clip-path: polygon(0 0, 8px 0, 4px 4px); pointer-events: none; }
.font-name { flex: 1; border-right: 1px solid #dcdfe4; padding-left: 2px; }
.font-name::after, .font-size::after { right: 3px; }
.font-size { width: 76px; padding-left: 2px; font-size: 16px; }
.sizers { display: flex; gap: 10px; margin-left: 11px; }
.sq { width: 29px; height: 28px; border-radius: 2px; }
.sq.on { background: #dde2e7; width: 28px; }
.sq.gap { margin-right: 1px; }
.text-group .gap ~ .gap { margin-right: 8px; }
.pinyin { flex-direction: column; font-size: 11px; line-height: 12px; }
.pinyin b { font-size: 12px; line-height: 16px; font-weight: 400; }
.para-group { width: 394px; padding-left: 6px; }
.para-tools { display: flex; flex-direction: column; gap: 3px; width: 268px; }
.inset { padding-left: 4px; }
.mini-line { width: 1px; height: 22px; background: #dfe2e7; margin: 0 5px; flex: none; }
.stack { display: flex; flex-direction: column; gap: 5px; }
.line-btn { height: 27px; gap: 4px; justify-content: flex-start; }
.art-group { width: 414px; padding-left: 6px; }
.gallery { display: flex; width: 213px; height: 60px; border: 1px solid #dfe2e6; border-radius: 3px; flex: none; }
.art { width: 61px; font: bold 47px/56px "Liberation Sans", sans-serif; }
.black { color: #000; text-shadow: 1px 2px 2px #bbb; }
.mint { color: #b8dfe1; text-shadow: 1px 2px 2px #ccc; }
.indigo { color: #a4a4df; -webkit-text-stroke: 3px #33339b; }
.more { width: 16px; border-left: 1px solid #e9ebef; margin-left: auto; }
.more i { width: 7px; height: 7px; background: #707b95; clip-path: polygon(0 0, 7px 0, 7px 1px, 0 1px, 0 3px, 7px 3px, 4px 7px, 0 3px); }
.art-group .stack { margin-left: 5px; width: 103px; }
.art-group .line-btn { padding-left: 4px; }
.outline-host { position: relative; }
.art-group .outline-btn { width: 102px; height: 28px; background: #dde2e7; padding: 1px; gap: 1px; }
.outline-btn span { display: flex; gap: 4px; background: #fff; width: 89px; height: 26px; align-items: center; padding-left: 3px; }
.shape-group { width: 413px; padding-left: 5px; }
.shapes { gap: 8px; padding-left: 4px; }
.shapes .more { margin-left: -4px; }
.abc { width: 57px; height: 53px; margin-top: 4px; border: 2px solid #222; border-radius: 9px; background: #fff; color: #111; }
.abc.m { border-color: #b8dfe1; }
.abc.i { border-color: #4444a2; }

/* outline drop-down */
.dropdown { position: absolute; z-index: 5; left: 0; top: 28px; width: 235px; background: #fff; border: 1px solid #c7cbd1; box-shadow: 1px 2px 4px #0002; padding: 1px 1px 0; }
.no-line { width: 229px; height: 25px; margin: 0 1px; background: #e7eaef; border-radius: 2px; justify-content: flex-start; gap: 11px; padding-left: 7px; }
.dropdown h3 { background: #f3f5f7; height: 31px; line-height: 27px; padding-left: 9px; color: #4a5468; }
.swatches { display: grid; grid-template-columns: repeat(10, 17px); column-gap: 5px; padding: 4px 5px; }
.swatches button { width: 17px; height: 17px; border: 1px solid #e0e2e7; }
.shades { padding-bottom: 5px; }
.dropdown hr { border: 0; border-top: 1px solid #d8dade; margin: 2px 0; }
.item { width: 100%; height: 33px; justify-content: flex-start; gap: 10px; padding-left: 9px; }
.item.last { height: 38px; padding-left: 40px; }
.sub { margin-left: auto; margin-right: 10px; width: 4px; height: 7px; background: #66728d; clip-path: polygon(0 0, 4px 3px, 0 7px); }
.pointer { position: absolute; left: 954px; top: 117px; z-index: 6; fill: #fe2012; stroke: none; }

/* workspace */
.workspace { display: flex; flex: 1; min-height: 0; }
.slides { width: 264px; flex: none; border-right: 2px solid #e2e4eb; display: flex; flex-direction: column; }
.slides-head { display: flex; align-items: center; height: 26px; margin: 13px 0 17px; padding-left: 9px; }
.view-tab { padding: 0 13px; height: 25px; color: #4a5468; }
.view-tab:nth-child(2) { margin-left: 44px; margin-right: 2px; }
.view-tab.on { background: #dae0e6; border-radius: 3px; color: #242b3d; }
.thumbs { list-style: none; margin: 0; padding: 0; display: flex; flex-direction: column; gap: 20px; }
.thumbs li { display: flex; padding-left: 23px; }
.num { width: 18px; font: 14px/37px "DejaVu Sans", sans-serif; }
.thumb { width: 210px; height: 159px; border: 1px solid #b0b0b0; background: #fff; display: flex; flex-direction: column; align-items: center; box-shadow: inset 0 0 0 2px #f8f8f8; }
.current .num { width: 16px; color: #d9622b; line-height: 41px; }
.current .thumb { width: 214px; height: 163px; border: 3px solid #d66a2c; }
.summer { margin-top: 51px; font: 900 19px/28px "Noto Sans CJK SC", sans-serif; color: transparent; background: linear-gradient(165deg, transparent 62%, #222 78%) 0 0 / 50% 100% no-repeat, linear-gradient(100deg, #8da045, #a4a050 18%, #e33 30%, #e22 46%, #9dc86e 52%, #c4e494 80%, #e99); background-clip: text; }
.mini-box { width: 154px; height: 54px; border: 1px solid #b8dfe1; display: flex; align-items: flex-end; justify-content: center; font: 700 13px/20px "Noto Sans CJK SC", sans-serif; }
.mini-box.first { margin-top: 11px; -webkit-text-stroke: 2px #000; color: #000; margin-right: 4px; }
.mini-box.second { margin: 24px 0 0 2px; height: 55px; font-weight: 500; color: #00a64e; }
.add { margin: auto 0 10px; align-self: center; }
.stage { flex: 1; min-width: 0; display: flex; justify-content: center; align-items: flex-start; padding-top: 21px; box-shadow: inset 0 5px 4px -4px #0001; }
.slide { position: relative; width: 1050px; height: 788px; background: #fff; box-shadow: 0 0 8px #0003; }
.text-box { position: absolute; width: 788px; height: 275px; display: flex; align-items: flex-end; justify-content: center; }
.plain { left: 119px; top: 46px; border: 1px solid #b8dfe1; padding-bottom: 9px; }
.title { font: 700 66px/70px "Noto Sans CJK SC", sans-serif; white-space: nowrap; }
.outlined { font: 900 66px "Noto Sans CJK SC", sans-serif; fill: #00b050; stroke: #000; stroke-width: 10; stroke-linejoin: round; }
.selected { left: 136px; top: 451px; border: 1px dashed #477; padding: 0 0 11px 36px; width: 789px; height: 276px; }
.marked { background: #c5c5c5; color: #479f6f; padding: 0 36px 8px 0; }
.handle { position: absolute; width: 14px; height: 14px; border: 1px solid #777; border-radius: 7px; background: #fff; margin: -8px; }
.nw, .n, .ne { top: 0; } .w, .e { top: 50%; } .sw, .s, .se { top: 100%; }
.nw, .w, .sw { left: 0; } .n, .s { left: 50%; } .ne, .e, .se { left: 100%; }
.stem { position: absolute; left: 50%; top: -20px; width: 1px; height: 14px; background: #777; margin-left: -1px; }
.rotate { position: absolute; left: 50%; top: -44px; margin-left: -13px; fill: #999; stroke: none; }
.rotate path { fill: none; stroke: #fff; stroke-width: 2; }
.rotate .tip { fill: #fff; stroke: none; }
.float-tools { position: absolute; left: 941px; top: 454px; display: flex; flex-direction: column; gap: 13px; align-items: center; }
.float-tools button { width: 35px; height: 35px; background: #fff; border: 1px solid #d8d8d8; box-shadow: 2px 3px 4px #0003; }
.float-tools .fold { width: 22px; height: 22px; border-radius: 11px; box-shadow: none; border-color: #bbb; }
.float-tools .fold::before { content: ""; width: 10px; height: 2px; background: #888; }
.float-tools .fold + button { margin-top: -2px; }

.scroll { width: 18px; background: #e8e9f0; display: flex; flex-direction: column; align-items: center; padding: 14px 0 26px; border-right: 1px solid #e0e2e8; flex: none; }
.track { flex: 1; width: 100%; display: flex; align-items: flex-end; padding: 0 1px 13px; }
.thumb-bar { width: 15px; height: 353px; border-radius: 8px; background: #d5d8e0; }
.tri { display: block; width: 8px; height: 4px; background: #8a95ab; }
.tri.up { clip-path: polygon(4px 0, 8px 4px, 0 4px); }
.tri.down { clip-path: polygon(0 0, 8px 0, 4px 4px); }
.scroll span { display: flex; flex-direction: column; gap: 1px; margin-top: 14px; }

/* properties */
.props { width: 326px; flex: none; border-right: 1px solid #e0e3e8; }
.props-head { display: flex; align-items: center; height: 39px; padding: 0 9px 4px; gap: 14px; color: #4a5468; }
.props-head span { display: flex; align-items: center; gap: 3px; margin-right: auto; }
.props-tabs { display: flex; height: 36px; border-bottom: 1px solid #e0e3e8; padding-left: 12px; }
.props-tabs button { width: 115px; height: 36px; color: #4a5468; }
.props-tabs .on { border: 1px solid #e0e3e8; border-bottom-color: #f5f7f9; font-weight: 700; color: #242b3d; }
.sub-tabs { display: flex; gap: 32px; height: 67px; margin: 0 11px 0 12px; border-bottom: 1px solid #e0e3e8; }
.sub-tabs button { flex-direction: column; justify-content: flex-start; padding-top: 5px; gap: 4px; color: #7a859c; height: 67px; }
.sub-tabs .on { width: 85px; color: #e8622f; font-weight: 500; border-bottom: 2px solid #e8622f; }
.props-body { padding: 19px 19px 0 25px; }
.section-head { display: flex; align-items: center; justify-content: space-between; height: 31px; }
.section-head h2 { color: #e8622f; font-weight: 500; position: relative; }
.section-head h2::before { content: ""; position: absolute; left: -12px; top: 8px; width: 7px; height: 7px; background: #e8622f; clip-path: polygon(100% 0, 100% 100%, 0 100%); }
.drop { width: 137px; height: 31px; background: #fff; border: 1px solid #d9dce1; border-radius: 3px; }
.drop select { text-align: center; text-align-last: center; padding-right: 15px; color: #4a5468; }
.radios { margin-top: 10px; }
.radios label { display: flex; align-items: center; gap: 4px; height: 29px; }
.radios input { appearance: none; width: 18px; height: 18px; border: 1px solid #a8adb8; border-radius: 9px; display: grid; place-items: center; background: #f9fafb; }
.radios input:checked::before { content: ""; width: 9px; height: 9px; border-radius: 5px; background: #242b3d; }
u { text-underline-offset: 2px; }
.lines { margin-top: 27px; }
.preview { justify-content: flex-start; padding-left: 17px; }
.bar { width: 92px; height: 8px; background: #000; }
.mint-bar { height: 6px; background: #b8dfe1; margin-left: -4px; }
.thin { height: 3px; }
.fields { border-top: 1px solid #f0f2f4; margin-top: 2px; padding-top: 18px; }
.field { display: flex; align-items: center; justify-content: space-between; height: 40px; margin-left: -1px; }
.field.tall { height: 44px; }
.field.short { height: 38px; }
.tall .drop { height: 36px; }
.color-drop, .cap-drop { width: 110px; height: 25px; background: #fff; border: 1px solid #d9dce1; border-radius: 3px; padding-left: 2px; justify-content: flex-start; }
.color-drop::after { right: 3px; }
.color-drop i { width: 90px; height: 19px; background: #b8dfe1; }
.cap-drop { padding-left: 4px; color: #4a5468; }
.alpha { display: flex; align-items: center; gap: 4px; }
.alpha button { width: 19px; height: 19px; border: 1px solid #7a859c; border-radius: 10px; }
.alpha svg { stroke: #59647a; stroke-width: 1; }
.alpha-track { position: relative; width: 92px; height: 20px; display: flex; align-items: center; }
.alpha-track output { position: absolute; left: -2px; top: -11px; color: #777; }
.alpha-track input { appearance: none; width: 100%; height: 2px; background: #bfc0c6; }
.alpha-track input::-webkit-slider-thumb { appearance: none; width: 11px; height: 9px; background: #f66f43; clip-path: polygon(50% 0, 100% 100%, 0 100%); margin-top: 8px; }
.spin { display: flex; width: 138px; height: 26px; background: #fff; border: 1px solid #c9cdd4; border-radius: 3px; }
.spin button { width: 28px; }
.spin svg { stroke: #777; stroke-width: 2; }
.spin input { flex: 1; min-width: 0; border: solid #d5d8dd; border-width: 0 1px; padding-left: 3px; }

.rail { position: relative; flex: 1 0 54px; max-width: 54px; display: flex; flex-direction: column; align-items: center; gap: 4px; padding: 13px 2px 3px 0; }
.grip { width: 25px; height: 5px; border: solid #ccc; border-width: 1px 0; margin-bottom: 10px; }
.rail button { width: 41px; height: 41px; border-radius: 3px; }
.rail .on { background: #dae0e8; }
.rail .dots { margin-top: auto; width: 100%; height: 51px; border-top: 1px solid #dfe2e7; padding-top: 11px; border-radius: 0; }
.gauge { position: absolute; right: -1px; top: 247px; width: 12px; height: 64px; border: 2px solid #777; border-radius: 6px; background: linear-gradient(#f5f7f9 54%, #fb7a2c 54%) content-box; padding: 1px; }

/* status bar */
.status { display: flex; align-items: center; height: 42px; border-top: 1px solid #dfe2e8; padding: 0 20px 0 13px; flex: none; white-space: nowrap; }
.stat-line { width: 1px; height: 18px; background: #dfe2e7; margin: 0 12px; }
.status > .stat-line { margin: 0 13px; }
.status-right { display: flex; align-items: center; margin-left: auto; }
.status-right > button { gap: 4px; }
.status-right > button + button { margin-left: 10px; }
.beautify { color: #68707f; }
.beautify svg { stroke: #68707f; }
.tri-up { width: 8px; height: 6px; margin: 0 2px 0 7px; background: #666; clip-path: polygon(50% 0, 100% 100%, 0 100%); }
.views { display: flex; gap: 2px; margin-left: -2px; }
.views button { width: 29px; height: 30px; border-radius: 2px; }
.views .on { background: #dae0e8; }
.play { width: 39px; height: 30px; background: #707b95; border-radius: 2px; margin-left: -2px; margin-right: 5px; }
.play svg { fill: #fff; stroke: none; }
.pct { font-size: 16px; }
.status-right .pct + button { margin-left: 12px; }
.zoom { appearance: none; width: 172px; height: 16px; margin: 0 14px 0 16px; background: linear-gradient(90deg, #3c4763 42%, #c9ccd3 42%) center / 100% 2px no-repeat; }
.zoom::-webkit-slider-thumb { appearance: none; width: 16px; height: 16px; border: 1px solid #555; border-radius: 8px; background: #efefef; }
```
